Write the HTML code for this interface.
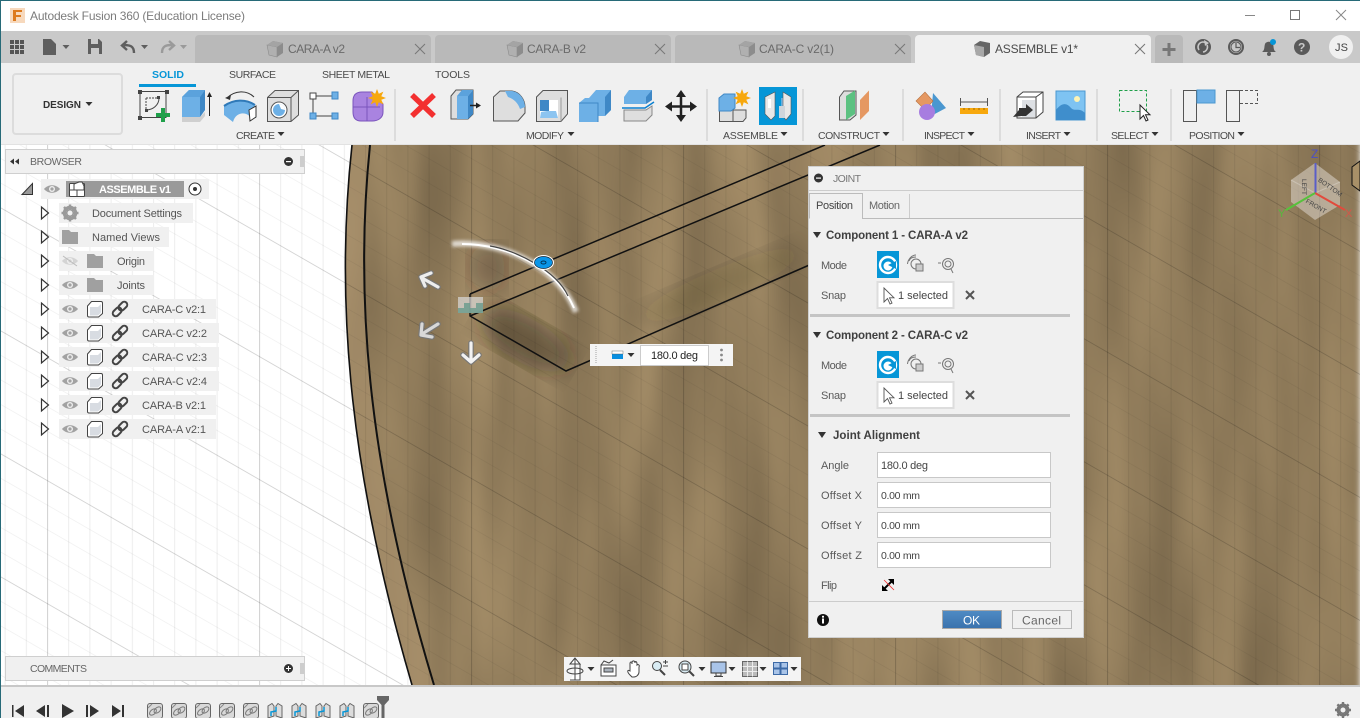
<!DOCTYPE html>
<html><head><meta charset="utf-8"><title>Autodesk Fusion 360</title>
<style>
html,body{margin:0;padding:0;width:1360px;height:718px;overflow:hidden;background:#f0f0f0}
svg{display:block;position:absolute;left:0;top:0}
text{font-family:"Liberation Sans",sans-serif;font-size:11px;fill:#555}
.tb{font-size:10.5px;fill:#4a4a4a}
.tab{font-size:12px;fill:#6a6a6a}
.tree{font-size:11px;fill:#555}
.j{font-size:11px;fill:#5a5a5a}
.jb{font-size:11.5px;font-weight:bold;fill:#404040}
.v{font-size:10.5px;fill:#444}
.val{font-size:11px;fill:#333}
</style></head><body>
<svg width="1360" height="718" viewBox="0 0 1360 718" xmlns="http://www.w3.org/2000/svg">
<defs>
<filter id="wood" x="0" y="0" width="100%" height="100%" color-interpolation-filters="sRGB">
<feTurbulence type="fractalNoise" baseFrequency="0.022 0.004" numOctaves="2" seed="7"/>
<feColorMatrix type="matrix" values="0.24 0 0 0 0.445  0.21 0 0 0 0.38  0.16 0 0 0 0.275  0 0 0 0 1"/>
<feGaussianBlur stdDeviation="3 5"/>
</filter>
<filter id="bl6"><feGaussianBlur stdDeviation="11"/></filter>
<filter id="bl1"><feGaussianBlur stdDeviation="1.5"/></filter>
<pattern id="gmin" width="21.2" height="24.6" patternUnits="userSpaceOnUse" patternTransform="translate(4.6,-12) skewY(29.9)">
<path d="M0.5 0V24.6" stroke="#000" stroke-opacity=".07" fill="none"/><path d="M0 0.5H21.2" stroke="#000" stroke-opacity=".05" fill="none"/>
</pattern>
<pattern id="gmaj" width="212" height="123" patternUnits="userSpaceOnUse" patternTransform="translate(47,-12) skewY(29.9)">
<path d="M0.5 0V123" stroke="#000" stroke-opacity=".12" fill="none"/><path d="M0 0.5H212" stroke="#000" stroke-opacity=".13" fill="none"/>
</pattern>
<clipPath id="vp"><rect x="0" y="145" width="1360" height="540"/></clipPath>
<clipPath id="woodc"><path d="M352 145C334 310 352 480 412 685H1360V145Z"/></clipPath>
<linearGradient id="gbtn" x1="0" y1="0" x2="0" y2="1"><stop offset="0" stop-color="#4f8bc4"/><stop offset="1" stop-color="#3a72ad"/></linearGradient>
<g id="tcube"><path d="M-8 -4L-2 -8L8 -6V4L2 8L-6 6Z" fill="#8c8c8c"/><path d="M-8 -4L2 -2V8L-6 6Z" fill="#b0b0b0" stroke="#8c8c8c" stroke-width=".6"/><path d="M-8 -4L-2 -8L8 -6L2 -2Z" fill="#a4a4a4"/></g>
<path id="x" d="M-5 -5L5 5M5 -5L-5 5" stroke="#777" stroke-width="1" fill="none"/>
<path id="car" d="M-3.5 -2H3.5L0 2Z" fill="#333"/>
<path id="tri" d="M-3.5 -6V6L3.5 0Z" fill="#fff" stroke="#333" stroke-width="1.2"/>
<path id="burst" d="M0 -9L1.800 -4.300L6.400 -6.400L4.300 -1.800L9 0L4.300 1.800L6.400 6.400L1.800 4.300L0 9L-1.800 4.300L-6.400 6.400L-4.300 1.800L-9 0L-4.300 -1.800L-6.400 -6.400L-1.800 -4.300Z" fill="#f7a80d"/>
<g id="eye"><path d="M-8 0C-4 -5 4 -5 8 0C4 5 -4 5 -8 0Z" fill="#a2a2a2"/><circle r="3" fill="#eee"/><circle r="1.6" fill="#a2a2a2"/></g>
<path id="fold" d="M-8 -7H-1L1 -5H8V7H-8Z" fill="#a0a0a0"/>
<g id="comp"><path d="M-7.500 -3L-3.500 -7.500H6a1.500 1.500 0 0 1 1.500 1.500V4.500L3.500 8H-6a1.500 1.500 0 0 1-1.500-1.500Z" fill="#fff" stroke="#444"/><path d="M-5 -2H3L6 -5V3.500L3 6.500H-5Z" fill="#d8dce2"/></g>
<g id="link" fill="none" stroke="#444" stroke-width="2"><rect x="-8" y="-3" width="10" height="6" rx="3" transform="rotate(-45) translate(-1,0)"/><rect x="-2" y="-3" width="10" height="6" rx="3" transform="rotate(-45) translate(1,0)"/></g>
<g id="cur"><path d="M0 0V14L3.5 10.5L6 16L8 15L5.5 9.8H10Z" fill="#fff" stroke="#555" stroke-width=".9"/></g>
<g id="mode"><circle r="8" fill="none" stroke="#fff" stroke-width="2.4"/><circle cy="1" r="4.500" fill="#fff"/><path d="M0 0L8 -4V4Z" fill="#0696d7"/></g>
<g id="modes"><g fill="none" stroke="#777"><path d="M-7 -3C-6 -6 -3 -7 0 -7M-8.5 0C-8 -5 -4 -9 0 -9"/><circle cx="0" cy="0" r="5"/><rect x="0" y="0" width="7" height="7" fill="#ccc"/></g></g>
<g id="modec"><g fill="none" stroke="#777"><path d="M-10 -3H-7"/><circle cx="0" cy="-2" r="5.5"/><circle cx="0" cy="-2" r="3"/><path d="M3 3L5 7"/></g></g>
<g id="tchain"><rect x="-7.5" y="-7.5" width="15" height="15" rx="2.5" fill="#d9d9d9" stroke="#666"/><path d="M-7 -3L-3 -7" stroke="#888"/><ellipse cx="-2" cy="1" rx="4" ry="2.4" transform="rotate(-40 -2 1)" fill="none" stroke="#777"/><ellipse cx="2.5" cy="-1" rx="4" ry="2.4" transform="rotate(-40 2.5 -1)" fill="none" stroke="#777"/></g>
<g id="tjoint"><path d="M-7 7V-5L-3 -7.5L-1 -5V5Z M7 7V-5L3 -7.5L1 -5V5Z" fill="#dcdcdc" stroke="#666"/><path d="M-4 5V1L1 0V-4" stroke="#0696d7" fill="none" stroke-width="1.5"/></g>
</defs>

<!-- viewport -->
<rect x="0" y="145" width="1360" height="540" fill="#fff"/>
<g clip-path="url(#woodc)">
<rect x="330" y="125" width="1030" height="580" fill="#8b7656" filter="url(#wood)"/>
<path d="M352 145C334 310 352 480 412 685H434C372 480 353 310 370 145Z" fill="#ad9570" fill-opacity=".6"/>
<path d="M470 294L825 145H880L470 316Z" fill="#a58d66" fill-opacity=".35"/>
<ellipse cx="525" cy="340" rx="50" ry="22" transform="rotate(30 525 340)" fill="#2b2013" fill-opacity=".45" filter="url(#bl6)"/>
<ellipse cx="487" cy="268" rx="18" ry="24" fill="#2b2013" fill-opacity=".3" filter="url(#bl6)"/>
<ellipse cx="720" cy="285" rx="90" ry="16" transform="rotate(-23 720 285)" fill="#2b2013" fill-opacity=".15" filter="url(#bl6)"/>
</g>
<g clip-path="url(#vp)">
<rect x="0" y="145" width="1360" height="540" fill="url(#gmin)"/>
<rect x="0" y="145" width="1360" height="540" fill="url(#gmaj)"/>
<g fill="none" stroke="#111" stroke-width="1.6">
<path d="M352 145C334 310 352 480 412 685"/>
<path d="M370 145C353 310 372 480 434 685" stroke-width="2"/>
<path d="M470 294L825 145M470 316L880 145M470 294V316L566 371L830 256" stroke-width="1.500"/>
</g>
<path d="M1360 161L1352 167V185L1360 191Z" fill="#a89068" stroke="#111"/>
</g>

<!-- gizmo -->
<path d="M452 244C495 240 556 262 576 312" fill="none" stroke="#fff" stroke-width="6" filter="url(#bl1)" opacity=".7"/>
<path d="M462 244C505 244 556 266 574 308" fill="none" stroke="#fff" stroke-width="2"/>
<path d="M490 246C515 250 556 270 568 296" fill="none" stroke="#444" stroke-width="1.200"/>
<ellipse cx="543.500" cy="262.500" rx="10.500" ry="7.500" fill="#fff"/><ellipse cx="543.500" cy="262.500" rx="9" ry="6" fill="#0a95e8" stroke="#123" stroke-width=".7"/><ellipse cx="543.500" cy="262.500" rx="2.500" ry="1.500" fill="none" stroke="#035"/>
<g fill="none" stroke-linecap="round" stroke-linejoin="round">
<path d="M438 287L422 278M431 273L421 277L425 286" stroke="#777" stroke-width="5.500"/><path d="M438 287L422 278M431 273L421 277L425 286" stroke="#eee" stroke-width="3.200"/>
<path d="M438 324L422 334M422 324L421 335L432 337" stroke="#777" stroke-width="5.500"/><path d="M438 324L422 334M422 324L421 335L432 337" stroke="#d8d8d8" stroke-width="3.200"/>
<path d="M471 343V361M463 355L471 362L479 355" stroke="#777" stroke-width="5.500"/><path d="M471 343V361M463 355L471 362L479 355" stroke="#f2f2f2" stroke-width="3.200"/>
</g>
<path d="M458 297H483V313H458Z" fill="#d8d8d8" fill-opacity=".7"/><path d="M458 308H464V303H470V308H476V303H483V313H458Z" fill="#6d9c8e" fill-opacity=".85"/>

<!-- value input -->
<rect x="590" y="344" width="143" height="22" fill="#f4f4f4"/>
<path d="M596 346V364" stroke="#ccc" stroke-dasharray="1 1" stroke-width="2"/>
<rect x="612" y="351" width="11" height="8" fill="#0a8fe0"/><rect x="612" y="351" width="11" height="3" fill="#fff" stroke="#555" stroke-width=".4"/><use href="#car" x="631" y="355"/>
<rect x="640.500" y="345.500" width="68" height="20" fill="#fff" stroke="#ccc"/>
<text x="651" y="359" class="val" textLength="47" style="fill:#222">180.0 deg</text>
<circle cx="721.500" cy="350" r="1.400" fill="#888"/><circle cx="721.500" cy="355" r="1.400" fill="#888"/><circle cx="721.500" cy="360" r="1.400" fill="#888"/>

<!-- view cube -->
<path d="M1315 163L1340 182V205L1315 220L1291 202V180Z" fill="#ddd6cc" fill-opacity=".55"/>
<path d="M1315 193L1291 180M1315 193L1340 182" stroke="#fff" stroke-opacity=".25"/>
<text x="1329" y="189" style="font-size:6.500px;fill:#444" transform="rotate(35 1329 189)" text-anchor="middle">BOTTOM</text>
<text x="1302" y="187" style="font-size:6.500px;fill:#444" transform="rotate(90 1302 187)" text-anchor="middle">LEFT</text>
<text x="1315" y="208" style="font-size:6.500px;fill:#444" transform="rotate(30 1315 208)" text-anchor="middle">FRONT</text>
<path d="M1315.500 193V163" stroke="#5a5ec8" stroke-width="2"/><path d="M1315 193L1345 210" stroke="#e24a3c" stroke-width="2"/><path d="M1315 193L1286 210" stroke="#57c23c" stroke-width="2"/>
<text x="1311" y="158" style="font-size:12px;fill:#4c50c4">Z</text><text x="1345" y="217" style="font-size:11px;fill:#d2574a">X</text><text x="1278" y="217" style="font-size:11px;fill:#55b83c">Y</text>

<!-- title bar -->
<rect x="0" y="0" width="1360" height="31" fill="#fff"/>
<rect x="0" y="0" width="1360" height="1" fill="#276a78"/>
<rect x="0" y="0" width="1" height="718" fill="#276a78"/>
<rect x="10" y="8" width="15" height="15" fill="#f7d9bd"/><path d="M13 10H22V12H16V15H21V17H16V21H13Z" fill="#dd7a1d"/>
<text x="30" y="20" style="font-size:12px;fill:#7c7c7c" textLength="215">Autodesk Fusion 360 (Education License)</text>
<path d="M1245 15.500H1255" stroke="#888"/><rect x="1290.500" y="10.500" width="9" height="9" fill="none" stroke="#777"/><path d="M1336 10L1346 20M1346 10L1336 20" stroke="#888"/>

<!-- tab bar -->
<rect x="1" y="31" width="1359" height="32" fill="#c9c9c9"/>
<path d="M195 63V39a4 4 0 0 1 4-4H427a4 4 0 0 1 4 4V63Z" fill="#b9b9b9"/>
<path d="M435 63V39a4 4 0 0 1 4-4H667a4 4 0 0 1 4 4V63Z" fill="#b9b9b9"/>
<path d="M675 63V39a4 4 0 0 1 4-4H907a4 4 0 0 1 4 4V63Z" fill="#b9b9b9"/>
<path d="M915 63V39a4 4 0 0 1 4-4H1147a4 4 0 0 1 4 4V63Z" fill="#f0f0f0"/>
<path d="M1155 63V39a4 4 0 0 1 4-4H1179a4 4 0 0 1 4 4V63Z" fill="#b9b9b9"/>
<path d="M1169 43V56M1162.500 49.500H1175.500" stroke="#777" stroke-width="3"/>
<use href="#tcube" x="275" y="49"/><text x="288" y="53" class="tab" textLength="57">CARA-A v2</text><use href="#x" x="420" y="49"/>
<use href="#tcube" x="515" y="49"/><text x="527" y="53" class="tab" textLength="59">CARA-B v2</text><use href="#x" x="660" y="49"/>
<use href="#tcube" x="747" y="49"/><text x="759" y="53" class="tab" textLength="75">CARA-C v2(1)</text><use href="#x" x="900" y="49"/>
<g transform="translate(982,49)"><path d="M-8 -4L-2 -8L8 -6V4L2 8L-6 6Z" fill="#666"/><path d="M-8 -4L2 -2V8L-6 6Z" fill="#a8a8a8"/></g>
<text x="995" y="53" class="tab" style="fill:#4a4a4a" textLength="83">ASSEMBLE v1*</text><use href="#x" x="1140" y="49"/>

<!-- left quick icons -->
<g fill="#555"><rect x="10" y="40" width="4" height="4"/><rect x="15" y="40" width="4" height="4"/><rect x="20" y="40" width="4" height="4"/><rect x="10" y="45" width="4" height="4"/><rect x="15" y="45" width="4" height="4"/><rect x="20" y="45" width="4" height="4"/><rect x="10" y="50" width="4" height="4"/><rect x="15" y="50" width="4" height="4"/><rect x="20" y="50" width="4" height="4"/></g>
<path d="M43 39H51L56 44V55H43Z" fill="#5e5e5e"/><path d="M62.500 45H69.500L66 49Z" fill="#5e5e5e"/>
<path d="M88 39H99L102 42V54H88Z" fill="#5e5e5e"/><rect x="91" y="39" width="7" height="5" fill="#c9c9c9"/><rect x="91" y="48" width="8" height="6" fill="#c9c9c9"/>
<path d="M134 53C134 46 130 45 124 45M127 41L122 45.500L127 50" fill="none" stroke="#5e5e5e" stroke-width="2.400"/><path d="M141 45H148L144.500 49Z" fill="#5e5e5e"/>
<path d="M162 53C162 46 166 45 172 45M169 41L174 45.500L169 50" fill="none" stroke="#9a9a9a" stroke-width="2.400"/><path d="M180 45H187L183.500 49Z" fill="#9a9a9a"/>

<!-- right icons -->
<g><circle cx="1203" cy="47" r="8" fill="#5a5a5a"/><path d="M1199 50A5 5 0 0 1 1206 43M1207 45A5 5 0 0 1 1203 52" fill="none" stroke="#c9c9c9" stroke-width="1.600"/><path d="M1204 40L1209 43L1205 46Z" fill="#c9c9c9"/>
<circle cx="1236" cy="47" r="8" fill="#5a5a5a"/><circle cx="1236" cy="47" r="6" fill="#c9c9c9"/><circle cx="1236" cy="47" r="5" fill="none" stroke="#5a5a5a"/><path d="M1236 43V47.500H1240" stroke="#5a5a5a" fill="none" stroke-width="1.200"/>
<path d="M1262 52C1265 50 1264 47 1265 44C1266 41 1272 41 1273 44C1274 47 1273 50 1276 52Z" fill="#5a5a5a"/><circle cx="1269" cy="54" r="2" fill="#5a5a5a"/><circle cx="1273" cy="42" r="3" fill="#0696d7"/>
<circle cx="1302" cy="47" r="8" fill="#5a5a5a"/><text x="1298" y="51.500" style="font-size:12px;font-weight:bold;fill:#c9c9c9">?</text>
<circle cx="1341" cy="47" r="12" fill="#f0f0f0"/><text x="1335" y="51" style="font-size:11px;fill:#444" textLength="13">JS</text></g>

<!-- toolbar -->
<rect x="1" y="63" width="1359" height="82" fill="#f0f0f0"/>
<rect x="13" y="74" width="109" height="60" rx="3" fill="#f0f0f0" stroke="#dcdcdc" stroke-width="2"/>
<text x="43" y="108" style="font-size:10px;font-weight:bold;fill:#333" textLength="38">DESIGN</text><use href="#car" x="89" y="104"/>
<text x="152" y="78" style="font-size:10.5px;fill:#0696d7;font-weight:bold" textLength="32">SOLID</text>
<rect x="139" y="84" width="57" height="3" fill="#0696d7"/>
<text x="229" y="78" class="tb" textLength="47">SURFACE</text>
<text x="322" y="78" class="tb" textLength="68">SHEET METAL</text>
<text x="435" y="78" class="tb" textLength="35">TOOLS</text>
<g fill="#dcdcdc"><rect x="394" y="89" width="2" height="52"/><rect x="706" y="89" width="2" height="52"/><rect x="802" y="89" width="2" height="52"/><rect x="902" y="89" width="2" height="52"/><rect x="999" y="89" width="2" height="52"/><rect x="1096" y="89" width="2" height="52"/><rect x="1170" y="89" width="2" height="52"/></g>
<text x="236" y="139" class="tb" textLength="39">CREATE</text><use href="#car" x="281" y="134"/>
<text x="526" y="139" class="tb" textLength="38">MODIFY</text><use href="#car" x="571" y="134"/>
<text x="723" y="139" class="tb" textLength="55">ASSEMBLE</text><use href="#car" x="784" y="134"/>
<text x="818" y="139" class="tb" textLength="62">CONSTRUCT</text><use href="#car" x="886" y="134"/>
<text x="924" y="139" class="tb" textLength="41">INSPECT</text><use href="#car" x="971" y="134"/>
<text x="1026" y="139" class="tb" textLength="35">INSERT</text><use href="#car" x="1067" y="134"/>
<text x="1111" y="139" class="tb" textLength="38">SELECT</text><use href="#car" x="1155" y="134"/>
<text x="1189" y="139" class="tb" textLength="46">POSITION</text><use href="#car" x="1241" y="134"/>

<!-- sketch -->
<g fill="none" stroke="#444"><path d="M140 91.500H166V117.500H140Z"/><path d="M146 98H159M146 98V110" stroke-dasharray="2 1"/><path d="M159 98C159 105 153 110 146 110"/></g>
<g fill="#444"><rect x="138" y="90" width="4" height="4"/><rect x="165" y="90" width="4" height="4"/><rect x="138" y="116" width="4" height="4"/><rect x="157" y="96" width="3" height="3"/><rect x="145" y="109" width="3" height="3"/></g>
<path d="M163 108V122M156 115H170" stroke="#1fa04a" stroke-width="4"/>
<!-- extrude -->
<path d="M182 97L189 90H205V110L200 117H182Z" fill="#6db0e6"/><path d="M200 97L205 90V110L200 117Z" fill="#3f88c6"/><path d="M182 97L189 90H205L200 97Z" fill="#5ba2dc"/><path d="M182 117H200L205 112V116L200 122H182Z" fill="#cfcfcf"/><path d="M209.500 116V95" stroke="#222"/><path d="M207 97L209.500 92L212 97Z" fill="#222"/>
<!-- revolve -->
<path d="M224 106C228 100 248 98 255 106L256 118L250 117C247 112 236 111 233 122L224 115Z" fill="#6db0e6"/><path d="M249 110L256 106V117L250 121Z" fill="#fff" stroke="#333"/><path d="M224 106C234 99 246 99 255 105" fill="none" stroke="#2f79b8" stroke-width="2"/><path d="M227 98C235 90 247 90 254 97" fill="none" stroke="#333"/><path d="M225 98L231 95L230 100Z" fill="#333"/>
<!-- hole -->
<path d="M267.500 97.500L275 90.500H298.500V115L291 121.500H267.500Z" fill="#dedede" stroke="#555"/><path d="M291 97.500V121.500M267.500 97.500H291L298.500 90.500" fill="none" stroke="#555"/><circle cx="279" cy="110" r="8" fill="#fff" stroke="#555"/><circle cx="279" cy="110" r="6" fill="#6db0e6"/><path d="M279 104A6 6 0 0 1 285 110L281 109Z" fill="#fff"/>
<!-- pattern -->
<path d="M316 96H332M313 99V113M316 116H332" stroke="#444"/><rect x="310" y="93" width="6" height="6" fill="#fff" stroke="#444"/><rect x="332" y="92" width="6" height="7" fill="#6db0e6" stroke="#3f88c6"/><rect x="310" y="113" width="6" height="6" fill="#6db0e6" stroke="#3f88c6"/><rect x="332" y="113" width="6" height="6" fill="#6db0e6" stroke="#3f88c6"/>
<!-- form -->
<path d="M353 101C353 94 357 92 362 92H372L383 104V112C383 118 378 121 372 121H361C356 121 353 118 353 112Z" fill="#a983e0" stroke="#7b55bd"/><path d="M353 107H380M367 97V121" stroke="#7b55bd"/><use href="#burst" x="377" y="98"/>
<!-- delete -->
<path d="M412 95L434 116M434 95L412 116" stroke="#f33030" stroke-width="5.500"/>
<!-- press pull -->
<path d="M451 96L456 90H473V114L468 119H451Z" fill="#dedede" stroke="#555"/><path d="M457 96H468V119H457Z" fill="#6db0e6"/><path d="M468 96L473 90V114L468 119Z" fill="#3f88c6"/><path d="M457 96L462 90H473L468 96Z" fill="#5ba2dc"/><path d="M470 105.500H479" stroke="#222" stroke-width="1.500"/><path d="M476 102.500L481 105.500L476 108.500Z" fill="#222"/>
<!-- fillet -->
<path d="M493.500 97L500 91H512C520 92 525 100 525 107V113L518 121H493.500Z" fill="#dedede" stroke="#555"/><path d="M505 91H512C520 92 525 100 525 107L520 109C518 103 514 99 508 97Z" fill="#6db0e6"/>
<!-- shell -->
<path d="M536.500 97L543 90.500H567.500V114L561 121.500H536.500Z" fill="#dedede" stroke="#555"/><rect x="540" y="100" width="18" height="18" fill="#fff"/><path d="M540 100H549V111H540Z" fill="#3f88c6"/><path d="M541 112L547 111H556L558 118H540Z" fill="#8cc4f0"/><path d="M561 97.500V121.500" stroke="#999"/>
<!-- combine -->
<path d="M589 98L596 90H611V110L605 116H598V122H579V103L585 98Z" fill="#6db0e6"/><path d="M605 97V116L611 110V90Z" fill="#3f88c6"/><path d="M579 103H598V122" fill="none" stroke="#3f88c6"/>
<!-- split -->
<path d="M624 97L629 90H652V100L646 104H624Z" fill="#6db0e6"/><path d="M646 97L652 90V100L646 104Z" fill="#3f88c6"/><path d="M622 108H645L654 102" fill="none" stroke="#0a7fd0" stroke-width="1.500"/><path d="M624 110H646L652 106V115L646 121H624Z" fill="#dedede" stroke="#888"/>
<!-- move -->
<path d="M681 94V119M668 106.500H694" stroke="#222" stroke-width="2.500"/><path d="M681 90L686 97H676ZM681 122L686 115H676ZM665 106.500L672 101.500V111.500ZM697 106.500L690 101.500V111.500Z" fill="#222"/>
<!-- new comp -->
<path d="M719.500 110H733V121.500H719.500Z M733 110H746V118L743 121.500H733Z" fill="#dedede" stroke="#555"/><path d="M719 98L724 94H735V108L731 111H719Z" fill="#6db0e6" stroke="#3f88c6"/><use href="#burst" x="742" y="98"/>
<!-- joint active -->
<rect x="759" y="87" width="38" height="38" fill="#0696d7"/>
<path d="M765 97L775 92V116L771 120L765 114Z" fill="#e8e8e8" stroke="#555" stroke-width=".6"/><path d="M791 97L783 92V116L786 120L791 114Z" fill="#e8e8e8" stroke="#555" stroke-width=".6"/><rect x="768" y="99" width="3" height="9" fill="#fff"/><rect x="779" y="106" width="6" height="12" fill="#cfd5db"/><path d="M782 98V106" stroke="#bce"/>
<!-- construct -->
<path d="M839.500 97L844 91H856V115L850 120H839.500Z" fill="#dedede" stroke="#555"/><path d="M846 96L855 90.500V114L846 120Z" fill="#5cc181"/><path d="M860 100L869 90.500V111L860 120Z" fill="#e59862"/>
<!-- inspect -->
<path d="M933 93L946 108L931 116Z" fill="#4a97d0"/><path d="M916 101L925 92L933 101L925 110Z" fill="#e59862" stroke="#b87240" stroke-width=".6"/><circle cx="927" cy="112" r="8" fill="#a77de0"/>
<path d="M960.500 98V106M987.500 98V106M961 102H987" stroke="#555" fill="none"/><rect x="960" y="108" width="28" height="6" fill="#f7a80d"/><path d="M964 108V110M969 108V110M974 108V110M979 108V110M984 108V110" stroke="#a36a00"/>
<!-- insert -->
<path d="M1017 97L1023 92H1043V112L1036 118H1017Z" fill="#fff" stroke="#444"/><path d="M1017 97H1036V118M1036 97L1043 92" stroke="#444" fill="none"/><rect x="1022" y="100" width="13" height="17" fill="#dde0e4"/><path d="M1013 117L1019 110V108H1026V104L1033 110L1026 116H1022Z" fill="#333"/>
<rect x="1056" y="91" width="29" height="29" fill="#7ec3f2" stroke="#4a97d0"/><circle cx="1077" cy="99" r="3" fill="#fdf3b5"/><path d="M1056 120V110C1062 102 1067 103 1071 108C1075 112 1079 107 1085 113V120Z" fill="#3f8ecc"/>
<!-- select -->
<rect x="1119.500" y="90.500" width="27" height="21" fill="none" stroke="#1fa04a" stroke-dasharray="3 2"/>
<g transform="translate(1140,105)"><path d="M0 0V14L3.500 10.500L6 16L8 15L5.500 9.800H10Z" fill="#fff" stroke="#222"/></g>
<!-- position -->
<rect x="1183.500" y="90.500" width="13" height="31" fill="#f0f0f0" stroke="#555"/><rect x="1197" y="90" width="18" height="13" fill="#6db0e6" stroke="#4a97d0"/>
<rect x="1226.500" y="90.500" width="13" height="31" fill="#f0f0f0" stroke="#555"/><path d="M1240 90.500H1257.500V103.500H1240" fill="none" stroke="#555" stroke-dasharray="3 2"/>

<rect x="1" y="144" width="1359" height="1" fill="#e2e2e2"/>

<!-- browser -->
<rect x="5.500" y="149.500" width="299" height="24" fill="#f0f0f0" stroke="#cfcfcf"/>
<path d="M10 161.500L14 158.500V164.500ZM15 161.500L19 158.500V164.500Z" fill="#333"/>
<text x="30" y="165" style="font-size:10.500px;fill:#666" textLength="52">BROWSER</text>
<circle cx="288.500" cy="161.500" r="4.500" fill="#333"/><rect x="286" y="161" width="5" height="1.200" fill="#fff"/>
<path d="M301 156V167M303 156V167" stroke="#aaa"/>

<rect x="41" y="179" width="168" height="20" fill="#f0f0f0"/>
<path d="M22 194.500H32.500V183.500Z" fill="#999" stroke="#333"/>
<use href="#eye" x="52" y="189"/>
<rect x="66" y="181" width="118" height="16" fill="#9a9a9a"/>
<rect x="69.500" y="183.500" width="15" height="13" fill="#fff" stroke="#444" rx="1"/><path d="M70 190H84M77 190V196M74 190V184L79 182H82L84 186V190" stroke="#444" fill="#fff"/>
<text x="99" y="193" style="font-size:11px;font-weight:bold;fill:#fff" textLength="72">ASSEMBLE v1</text>
<circle cx="195" cy="189" r="6" fill="#fff" stroke="#333"/><circle cx="195" cy="189" r="2" fill="#333"/>

<g fill="#f0f0f0"><rect x="59" y="203" width="134" height="20"/><rect x="59" y="227" width="110" height="20"/><rect x="59" y="251" width="95" height="20"/><rect x="59" y="275" width="95" height="20"/><rect x="59" y="299" width="157" height="20"/><rect x="59" y="323" width="160" height="20"/><rect x="59" y="347" width="160" height="20"/><rect x="59" y="371" width="160" height="20"/><rect x="59" y="395" width="157" height="20"/><rect x="59" y="419" width="157" height="20"/></g>
<use href="#tri" x="45" y="213"/><use href="#tri" x="45" y="237"/><use href="#tri" x="45" y="261"/><use href="#tri" x="45" y="285"/><use href="#tri" x="45" y="309"/><use href="#tri" x="45" y="333"/><use href="#tri" x="45" y="357"/><use href="#tri" x="45" y="381"/><use href="#tri" x="45" y="405"/><use href="#tri" x="45" y="429"/>
<g transform="translate(70,213)"><circle r="5.500" fill="none" stroke="#9a9a9a" stroke-width="3.500"/><path d="M0 -8.500V8.500M-8.500 0H8.500M-6 -6L6 6M6 -6L-6 6" stroke="#9a9a9a" stroke-width="2.500"/><circle r="2.500" fill="#f0f0f0"/></g>
<text x="92" y="217" class="tree" textLength="90">Document Settings</text>
<use href="#fold" x="70" y="237"/><text x="92" y="241" class="tree" textLength="68">Named Views</text>
<use href="#eye" x="70" y="261" opacity=".35"/><path d="M63 256L77 266" stroke="#bbb"/><use href="#fold" x="95" y="261"/><text x="117" y="265" class="tree" textLength="28">Origin</text>
<use href="#eye" x="70" y="285"/><use href="#fold" x="95" y="285"/><text x="117" y="289" class="tree" textLength="28">Joints</text>
<use href="#eye" x="70" y="309"/><use href="#comp" x="95" y="309"/><use href="#link" x="120" y="309"/><text x="142" y="313" class="tree" textLength="64">CARA-C v2:1</text>
<use href="#eye" x="70" y="333"/><use href="#comp" x="95" y="333"/><use href="#link" x="120" y="333"/><text x="142" y="337" class="tree" textLength="65">CARA-C v2:2</text>
<use href="#eye" x="70" y="357"/><use href="#comp" x="95" y="357"/><use href="#link" x="120" y="357"/><text x="142" y="361" class="tree" textLength="65">CARA-C v2:3</text>
<use href="#eye" x="70" y="381"/><use href="#comp" x="95" y="381"/><use href="#link" x="120" y="381"/><text x="142" y="385" class="tree" textLength="65">CARA-C v2:4</text>
<use href="#eye" x="70" y="405"/><use href="#comp" x="95" y="405"/><use href="#link" x="120" y="405"/><text x="142" y="409" class="tree" textLength="64">CARA-B v2:1</text>
<use href="#eye" x="70" y="429"/><use href="#comp" x="95" y="429"/><use href="#link" x="120" y="429"/><text x="142" y="433" class="tree" textLength="64">CARA-A v2:1</text>

<!-- comments -->
<rect x="5.500" y="656.500" width="299" height="24" fill="#f0f0f0" stroke="#cfcfcf"/>
<text x="30" y="672" style="font-size:10.500px;fill:#666" textLength="57">COMMENTS</text>
<circle cx="288.500" cy="668.500" r="4.500" fill="#333"/><path d="M286 668.500H291M288.500 666V671" stroke="#fff"/>
<path d="M301 663V674M303 663V674" stroke="#aaa"/>

<!-- nav bar -->
<rect x="564" y="657" width="237" height="24" fill="#f4f4f4"/>
<g fill="none" stroke="#444">
<path d="M575 659V680M570 680H580V664M575 658L570 664H580Z" fill="#fff"/><ellipse cx="575" cy="671" rx="8" ry="3"/>
<rect x="601" y="665" width="15" height="11" fill="#fff"/><rect x="604" y="668" width="9" height="4" fill="#aab2bb"/><path d="M601 665L604 661L609 663L613 660"/>
<path d="M630 675C627 672 627 669 630 671V663C631 661 632 662 632 664V662C633 660 635 661 635 663V662C636 661 637 662 637 664V665C638 664 640 665 639 667V672C639 675 636 677 634 677H632Z" fill="#fff"/>
<circle cx="657" cy="666" r="4.500" fill="#d9ecf4"/><path d="M660 670L665 675" stroke-width="2"/><path d="M663 662H668M665.500 660V664M663 666H668"/>
<circle cx="685" cy="667" r="6" fill="#d9ecf4"/><rect x="682" y="664" width="6" height="6" fill="#fff"/><path d="M689 671L694 676" stroke-width="2"/>
<rect x="711" y="662" width="15" height="11" fill="#a9c4e8" stroke="#333"/><path d="M716 673V676H721V673M714 676.500H723"/>
<rect x="742.500" y="661.500" width="15" height="15" fill="#bbb" stroke="#666"/><path d="M747.500 661.500V676.500M752.500 661.500V676.500M742.500 666.500H757.500M742.500 671.500H757.500" stroke="#eee"/>
<rect x="773.500" y="662.500" width="14" height="12" fill="#a9c4e8" stroke="#3d6aa6"/><path d="M780.500 662.500V674.500M773.500 668.500H787.500" stroke="#3d6aa6" stroke-width="2"/>
</g>
<use href="#car" x="591" y="669"/><use href="#car" x="702" y="669"/><use href="#car" x="732" y="669"/><use href="#car" x="763" y="669"/><use href="#car" x="794" y="669"/>

<!-- timeline -->
<rect x="1" y="685" width="1359" height="33" fill="#f0f0f0"/><rect x="1" y="685" width="1359" height="2" fill="#c8c8c8"/>
<path d="M12 705H13.500V717H12ZM24 705V717L15 711Z M49 705V717H47V705ZM45 705V717L36 711Z" fill="#333"/>
<path d="M62 704V718L74 711Z" fill="#333"/>
<path d="M86 705H88V717H86ZM90 705V717L99 711Z M124 705V717H122V705ZM112 705V717L121 711Z" fill="#333"/>
<use href="#tchain" x="155" y="711"/><use href="#tchain" x="179" y="711"/><use href="#tchain" x="203" y="711"/><use href="#tchain" x="227" y="711"/><use href="#tchain" x="251" y="711"/>
<use href="#tjoint" x="275" y="711"/><use href="#tjoint" x="299" y="711"/><use href="#tjoint" x="323" y="711"/><use href="#tjoint" x="347" y="711"/>
<use href="#tchain" x="371" y="711"/>
<path d="M377 696H389V700L384.500 705V718H381.500V705L377 700Z" fill="#666"/>
<g transform="translate(1343,710)"><circle r="5" fill="none" stroke="#777" stroke-width="3"/><path d="M0 -8V8M-8 0H8M-5.600 -5.600L5.600 5.600M5.600 -5.600L-5.600 5.600" stroke="#777" stroke-width="2.400"/><circle r="2.500" fill="#f0f0f0"/></g>

<!-- joint panel -->
<rect x="808.500" y="166.500" width="275" height="471" fill="#f0f0f0" stroke="#cfcfcf"/>
<circle cx="818.500" cy="178" r="4.500" fill="#333"/><rect x="816" y="177.500" width="5" height="1.200" fill="#fff"/>
<text x="833" y="182" style="font-size:10.500px;fill:#777" textLength="28">JOINT</text>
<path d="M809 190.500H1083" stroke="#ccc"/>
<path d="M809.500 218.500V193.500H862.500V218.500" fill="#f0f0f0" stroke="#bbb"/><path d="M909.500 194V218" stroke="#ccc"/><path d="M862 218.500H1083" stroke="#bbb"/>
<text x="816" y="209" class="j" style="fill:#444" textLength="37">Position</text><text x="869" y="209" class="j" style="fill:#666" textLength="31">Motion</text>

<path d="M813 232H821L817 238Z" fill="#333"/>
<text x="826" y="239" class="jb" textLength="142">Component 1 - CARA-A v2</text>
<text x="821" y="269" class="j" textLength="26">Mode</text>
<rect x="877" y="251" width="22" height="27" fill="#0696d7"/><use href="#mode" x="888" y="265"/>
<use href="#modes" x="916" y="264"/><use href="#modec" x="948" y="266"/>
<text x="821" y="299" class="j" textLength="25">Snap</text>
<rect x="877.500" y="282" width="76" height="26" fill="#fff" stroke="#ddd" stroke-width="2"/><use href="#cur" x="884" y="288"/>
<text x="898" y="299" class="j" style="fill:#444" textLength="50">1 selected</text>
<path d="M966 291L974 299M974 291L966 299" stroke="#555" stroke-width="2"/>
<rect x="810" y="314" width="260" height="3" fill="#c4c4c4"/>

<path d="M813 332H821L817 338Z" fill="#333"/>
<text x="826" y="339" class="jb" textLength="142">Component 2 - CARA-C v2</text>
<text x="821" y="369" class="j" textLength="26">Mode</text>
<rect x="877" y="351" width="22" height="27" fill="#0696d7"/><use href="#mode" x="888" y="365"/>
<use href="#modes" x="916" y="364"/><use href="#modec" x="948" y="366"/>
<text x="821" y="399" class="j" textLength="25">Snap</text>
<rect x="877.500" y="382" width="76" height="26" fill="#fff" stroke="#ddd" stroke-width="2"/><use href="#cur" x="884" y="388"/>
<text x="898" y="399" class="j" style="fill:#444" textLength="50">1 selected</text>
<path d="M966 391L974 399M974 391L966 399" stroke="#555" stroke-width="2"/>
<rect x="810" y="414" width="260" height="3" fill="#c4c4c4"/>

<path d="M818 432H826L822 438Z" fill="#333"/>
<text x="833" y="439" class="jb" textLength="87">Joint Alignment</text>
<g fill="#fff" stroke="#c8c8c8"><rect x="877.500" y="452.500" width="173" height="25"/><rect x="877.500" y="482.500" width="173" height="25"/><rect x="877.500" y="512.500" width="173" height="25"/><rect x="877.500" y="542.500" width="173" height="25"/></g>
<text x="821" y="469" class="j" textLength="28">Angle</text><text x="881" y="469" class="j" style="fill:#444" textLength="47">180.0 deg</text>
<text x="821" y="499" class="j" textLength="41">Offset X</text><text x="881" y="499" class="v" textLength="39">0.00 mm</text>
<text x="821" y="529" class="j" textLength="41">Offset Y</text><text x="881" y="529" class="v" textLength="39">0.00 mm</text>
<text x="821" y="559" class="j" textLength="41">Offset Z</text><text x="881" y="559" class="v" textLength="39">0.00 mm</text>
<text x="821" y="589" class="j" textLength="16">Flip</text>
<path d="M884 589L892 581" stroke="#000" stroke-width="2"/><path d="M882 591V585L888 591ZM894 579V585L888 579Z" fill="#000"/><path d="M884 580L894 590" stroke="#e33" stroke-width=".8"/>
<path d="M809 601.500H1083" stroke="#ccc"/>
<circle cx="823" cy="620" r="6" fill="#111"/><rect x="822" y="618.500" width="2" height="5" fill="#fff"/><rect x="822" y="615.800" width="2" height="1.800" fill="#fff"/>
<rect x="942.500" y="610.500" width="59" height="18" fill="url(#gbtn)" stroke="#a8a8a8"/>
<text x="963" y="624.500" style="font-size:12px;fill:#fff" textLength="17">OK</text>
<rect x="1012.500" y="610.500" width="59" height="18" fill="#f0f0f0" stroke="#bbb"/>
<text x="1022" y="624.500" style="font-size:12px;fill:#666" textLength="39">Cancel</text>
</svg>
</body></html>
